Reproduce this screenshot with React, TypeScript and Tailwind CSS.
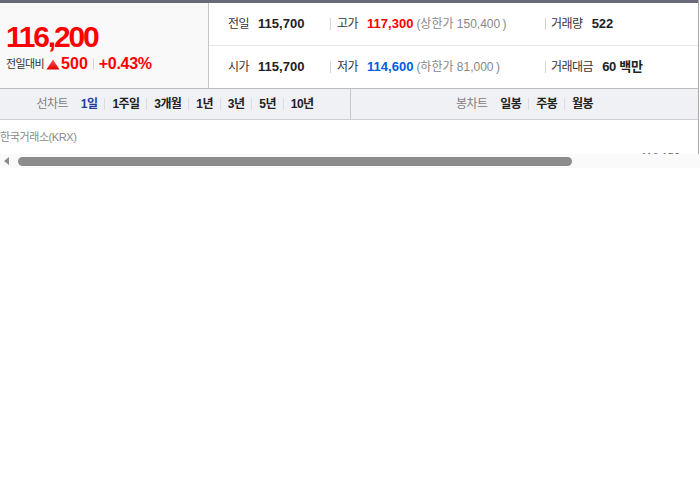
import React from "react";

const FONT = "font-['Liberation_Sans','Noto_Sans_CJK_KR',sans-serif]";

const Sep = ({ className = "" }: { className?: string }) => (
  <span className={`inline-block h-[12px] w-px bg-[#d5d5d5] ${className}`} />
);

const UpTriangle = () => (
  <svg width="14" height="11" viewBox="0 0 14 11" className="mr-px">
    <defs>
      <linearGradient id="tri" x1="0" y1="0" x2="0" y2="1">
        <stop offset="0" stopColor="#ff5a5a" />
        <stop offset="1" stopColor="#e00000" />
      </linearGradient>
    </defs>
    <polygon points="7,0.5 13.5,10.5 0.5,10.5" fill="url(#tri)" />
  </svg>
);

const periods = ["1주일", "3개월", "1년", "3년", "5년", "10년"];
const candles = ["일봉", "주봉", "월봉"];

export default function App() {
  return (
    <div className={`w-[700px] h-[490px] bg-white ${FONT}`}>
      <div className="w-[699px] border-r border-[#a9a9a9]">
        {/* top rule */}
        <div className="h-[3px] bg-[#666b75]" />

        {/* price summary */}
        <div className="flex h-[86px] border-b border-[#bcbcbc]">
          <div className="w-[209px] shrink-0 border-r border-[#c6c6c6] bg-[#f9f9f9] pl-[6px] pt-[18px]">
            <div className="text-[30px] leading-[32px] font-bold tracking-[-2.2px] text-[#f00]">
              116,200
            </div>
            <div className="mt-[3px] flex items-center">
              <span className="text-[11px] text-[#333] tracking-[-0.6px]">전일대비</span>
              <span className="ml-[2px] flex items-center">
                <UpTriangle />
                <span className="text-[16px] font-bold text-[#f00] leading-none">500</span>
              </span>
              <Sep className="mx-[5px]" />
              <span className="text-[16px] font-bold text-[#f00] leading-none tracking-[-0.3px]">+0.43%</span>
            </div>
          </div>

          <div className="flex flex-1 flex-col tracking-[-0.5px]">
            <div className="flex h-[43px] items-center border-b border-[#e6e6e6] text-[12px]">
              <div className="flex w-[121px] items-center pl-[19px]">
                <span className="text-[#333]">전일</span>
                <span className="ml-[9px] text-[13px] font-bold text-[#222] tracking-normal">115,700</span>
              </div>
              <div className="flex w-[215px] items-center">
                <Sep className="mr-[6px]" />
                <span className="text-[#333]">고가</span>
                <span className="ml-[9px] text-[13px] font-bold text-[#f00] tracking-normal">117,300</span>
                <span className="ml-[3px] text-[#888] tracking-normal">(상한가 150,400&thinsp;)</span>
              </div>
              <div className="flex items-center">
                <Sep className="mr-[5px]" />
                <span className="text-[#333]">거래량</span>
                <span className="ml-[9px] text-[13px] font-bold text-[#222] tracking-normal">522</span>
              </div>
            </div>
            <div className="flex h-[42px] items-center text-[12px]">
              <div className="flex w-[121px] items-center pl-[19px]">
                <span className="text-[#333]">시가</span>
                <span className="ml-[9px] text-[13px] font-bold text-[#222] tracking-normal">115,700</span>
              </div>
              <div className="flex w-[215px] items-center">
                <Sep className="mr-[6px]" />
                <span className="text-[#333]">저가</span>
                <span className="ml-[9px] text-[13px] font-bold text-[#005ee0] tracking-normal">114,600</span>
                <span className="ml-[3px] text-[#888] tracking-normal">(하한가 81,000&thinsp;)</span>
              </div>
              <div className="flex items-center">
                <Sep className="mr-[5px]" />
                <span className="text-[#333]">거래대금</span>
                <span className="ml-[9px] text-[13px] font-bold text-[#222] tracking-[-0.3px]">60 백만</span>
              </div>
            </div>
          </div>
        </div>

        {/* chart tabs */}
        <div className="flex h-[31px] border-b border-[#cfcfcf] bg-[#f0f1f5] text-[12px] tracking-[-0.6px]">
          <div className="flex w-[351px] items-center justify-center border-r border-[#c9c9c9]">
            <span className="mr-[13px] text-[#808080]">선차트</span>
            <span className="font-bold text-[#1d3c9c]">1일</span>
            {periods.map((p) => (
              <React.Fragment key={p}>
                <Sep className="mx-[7px] h-[11px] bg-[#dcdcdc]" />
                <span className="font-bold text-[#222]">{p}</span>
              </React.Fragment>
            ))}
          </div>
          <div className="flex flex-1 items-center justify-center">
            <span className="mr-[13px] text-[#808080]">봉차트</span>
            {candles.map((c, i) => (
              <React.Fragment key={c}>
                {i > 0 && <Sep className="mx-[7px] h-[11px] bg-[#dcdcdc]" />}
                <span className="font-bold text-[#222]">{c}</span>
              </React.Fragment>
            ))}
          </div>
        </div>

        {/* chart area (cut off) */}
        <div className="h-[34px] pt-[11px]">
          <div className="text-[11px] leading-[13px] text-[#8a8a8a] tracking-[-0.4px]">한국거래소(KRX)</div>
          <div className="mt-[7px] flex h-[3px] justify-end overflow-hidden pr-[18px]">
            <span className="text-[11px] leading-[13px] text-[#666]">116,150</span>
          </div>
        </div>
      </div>

      {/* horizontal scrollbar */}
      <div className="flex h-[14px] items-center bg-[#fafafa]">
        <svg width="6" height="8" viewBox="0 0 6 8" className="ml-[4px]">
          <polygon points="5,0 5,8 0,4" fill="#8a8a8a" />
        </svg>
        <div className="ml-[8px] h-[9px] w-[554px] rounded-full bg-[#8c8c8c]" />
      </div>
    </div>
  );
}
